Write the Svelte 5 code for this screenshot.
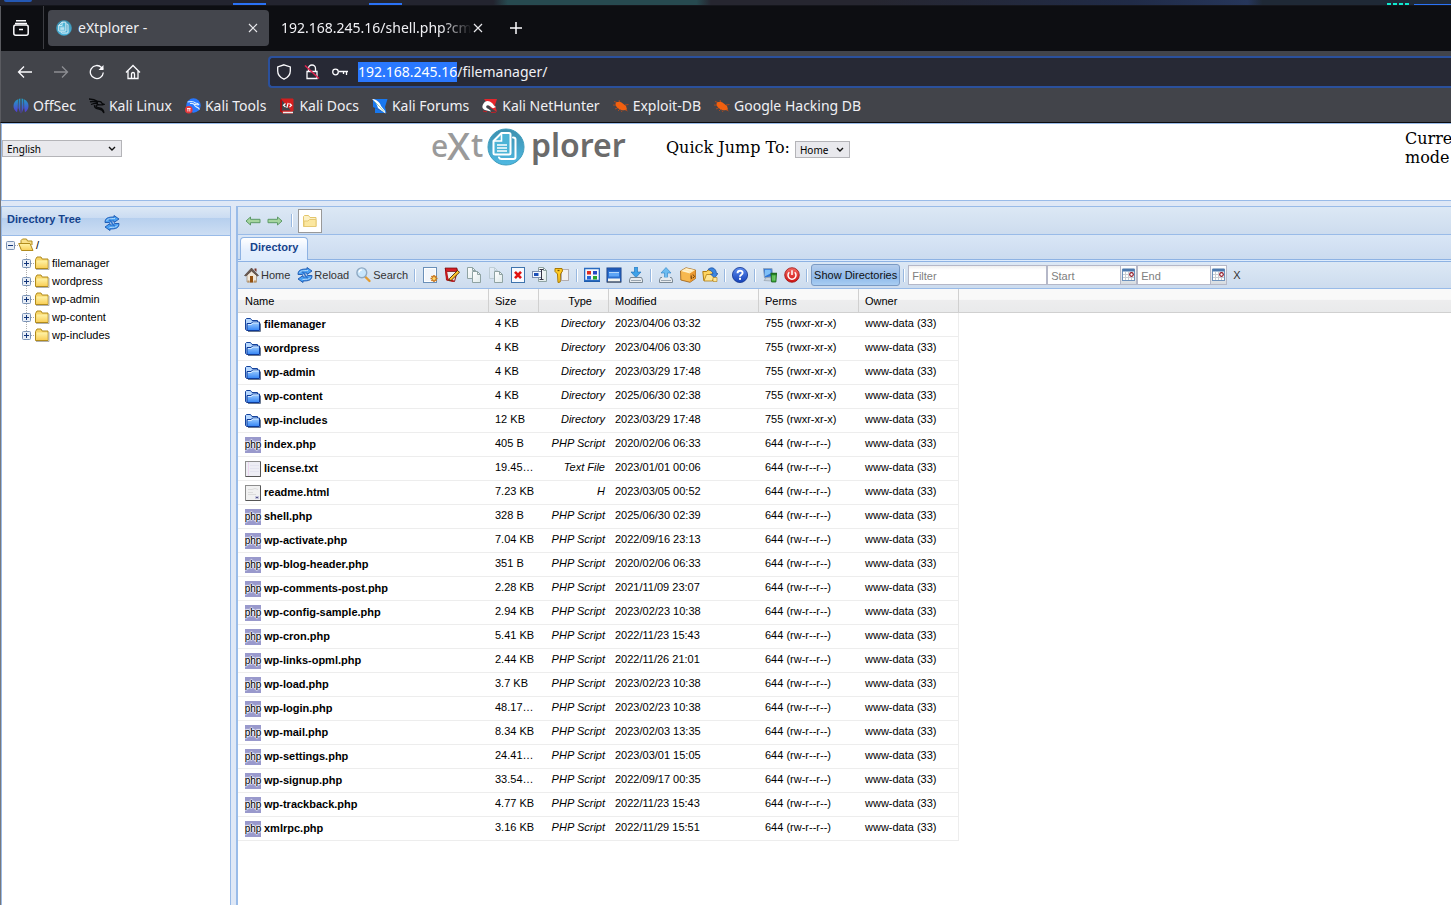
<script>
  import { onMount } from 'svelte';

  let urlBox;
  onMount(() => {
    urlBox.focus({ preventScroll: true });
    urlBox.setSelectionRange(0, 14);
  });

  const bookmarks = [
    ['offsec', 'OffSec'],
    ['kali', 'Kali Linux'],
    ['tools', 'Kali Tools'],
    ['docs', 'Kali Docs'],
    ['forums', 'Kali Forums'],
    ['nethunter', 'Kali NetHunter'],
    ['bug', 'Exploit-DB'],
    ['bug', 'Google Hacking DB']
  ];

  const folders = ['filemanager', 'wordpress', 'wp-admin', 'wp-content', 'wp-includes'];

  const labelled = [
    ['home', 'Home'],
    ['reload', 'Reload'],
    ['search', 'Search']
  ];

  const iconGroups = [
    [
      ['newfile', 'New'],
      ['edit', 'Edit'],
      ['copy', 'Copy'],
      ['move', 'Move'],
      ['delete', 'Delete'],
      ['rename', 'Rename'],
      ['chmod', 'Permissions']
    ],
    [
      ['view', 'View'],
      ['window', 'Diff'],
      ['download', 'Download']
    ],
    [
      ['upload', 'Upload'],
      ['archive', 'Archive'],
      ['extract', 'Extract']
    ],
    [['help', 'Info']],
    [
      ['ftp', 'Network'],
      ['logout', 'Logout']
    ]
  ];

  const DIR = '755 (rwxr-xr-x)';
  const FILE = '644 (rw-r--r--)';
  const rows = [
    ['folder', 'filemanager', '4 KB', 'Directory', '2023/04/06 03:32', DIR],
    ['folder', 'wordpress', '4 KB', 'Directory', '2023/04/06 03:30', DIR],
    ['folder', 'wp-admin', '4 KB', 'Directory', '2023/03/29 17:48', DIR],
    ['folder', 'wp-content', '4 KB', 'Directory', '2025/06/30 02:38', DIR],
    ['folder', 'wp-includes', '12 KB', 'Directory', '2023/03/29 17:48', DIR],
    ['php', 'index.php', '405 B', 'PHP Script', '2020/02/06 06:33', FILE],
    ['txt', 'license.txt', '19.45 KB', 'Text File', '2023/01/01 00:06', FILE],
    ['html', 'readme.html', '7.23 KB', 'H', '2023/03/05 00:52', FILE],
    ['php', 'shell.php', '328 B', 'PHP Script', '2025/06/30 02:39', FILE],
    ['php', 'wp-activate.php', '7.04 KB', 'PHP Script', '2022/09/16 23:13', FILE],
    ['php', 'wp-blog-header.php', '351 B', 'PHP Script', '2020/02/06 06:33', FILE],
    ['php', 'wp-comments-post.php', '2.28 KB', 'PHP Script', '2021/11/09 23:07', FILE],
    ['php', 'wp-config-sample.php', '2.94 KB', 'PHP Script', '2023/02/23 10:38', FILE],
    ['php', 'wp-cron.php', '5.41 KB', 'PHP Script', '2022/11/23 15:43', FILE],
    ['php', 'wp-links-opml.php', '2.44 KB', 'PHP Script', '2022/11/26 21:01', FILE],
    ['php', 'wp-load.php', '3.7 KB', 'PHP Script', '2023/02/23 10:38', FILE],
    ['php', 'wp-login.php', '48.17 KB', 'PHP Script', '2023/02/23 10:38', FILE],
    ['php', 'wp-mail.php', '8.34 KB', 'PHP Script', '2023/02/03 13:35', FILE],
    ['php', 'wp-settings.php', '24.41 KB', 'PHP Script', '2023/03/01 15:05', FILE],
    ['php', 'wp-signup.php', '33.54 KB', 'PHP Script', '2022/09/17 00:35', FILE],
    ['php', 'wp-trackback.php', '4.77 KB', 'PHP Script', '2022/11/23 15:43', FILE],
    ['php', 'xmlrpc.php', '3.16 KB', 'PHP Script', '2022/11/29 15:51', FILE]
  ];

  const sheet = (x, y, w, h, stroke = '#8fa3a3') =>
    `<path d="M${x} ${y}h${w - 3}l3 3v${h - 3}h-${w}z" fill="url(#gPaper)" stroke="${stroke}"/><path d="M${x + w - 3} ${y}v3h3" fill="none" stroke="${stroke}"/>`;

  const icons = {
    offsec:
      '<g fill="url(#gOff)"><path d="M5 1.200A7.500 7.500 0 0 0 .5 8 7.500 7.500 0 0 0 4 14.200L4.800 10z"/><path d="M5.700 1Q6.500.6 7.400.5V15.500L5.400 10z"/><path d="M8.600.5q1 .1 1.700.5L10.600 10l-2 5.500z"/><path d="M11 1.200A7.500 7.500 0 0 1 15.500 8 7.500 7.500 0 0 1 12 14.200L11.200 10z"/></g>',
    kali:
      '<path d="M0 1c4 0 6.500.8 9 2.500-2.500-.6-5-.6-8 .4 3-.4 5.500-.3 8 .6M2 6.500c2.500-1 4.500-1.300 7-1M9 3.500c2.500-.3 3.700.8 4.200 2l2 .8-2 .6c-2 .3-5-.9-6 .6-.7 1.300 1.200 2 3.200 2.300 2.800.4 4.200 1.800 4.600 5.200-1.200-2.600-2.200-3.500-5-3.900-2.600-.4-5-1.500-4.500-4" fill="none" stroke="#08090b" stroke-width="1.300"/>',
    tools:
      '<circle cx="8.500" cy="7.500" r="7.200" fill="#2777ff"/><path d="M2.500 4c4-1 7 0 8 1 2 0 3 .8 3.600 2M5 5.500c3-.5 4 .5 4.500 1.500-.5 2 4 1.600 5 4.500M9.500 6c1 1 2.500.6 4 1" fill="none" stroke="#dff0ff" stroke-width="1.100"/><circle cx="3.800" cy="11.800" r="3.800" fill="#e5383b"/><path d="M2 10.500h3.600M2.900 10.500v3M4.800 10.500v3" stroke="#fff" stroke-width=".9"/>',
    docs:
      '<path d="M2 1h12v12H4q-1 0-1 1t1 1h10" fill="#d31f1f" stroke="#d31f1f"/><path d="M2 1.500v12.500" stroke="#a00d12" stroke-width="2"/><path d="M4 14.500h10" stroke="#eee" stroke-width="1.500"/><path d="M6.500 5.500 4.500 7.300l2 1.800M10.500 5.500l2 1.800-2 1.800M9.200 4.800 7.800 9.800" fill="none" stroke="#fff" stroke-width="1.200"/>',
    forums:
      '<path d="M1 1h14.500l-2.500 8 1.500 6L1 9z" fill="#1878ef"/><path d="M3 15h11L3 10z" fill="#1878ef"/><path d="M0 1c5 .5 8 3.500 9 7l4 5 .5 2.500L10 13 6 10C5 6 3 3.500 0 1z" fill="#fff"/><path d="M2.500 3.500 8 9l4 4.500" fill="none" stroke="#5a7" stroke-width=".6"/>',
    nethunter:
      '<path d="M2 1h13l-2 6 2 7-6-4z" fill="#e5262c"/><path d="M1 6.500C3 2 7 2 10 5c1.500 1.500 2 3 4 4l-3 1.200c-2-.4-3-3-5-3s-2.500 2-1 3 3 1 4 3.200L3 12C0 10.500 0 8.500 1 6.500z" fill="#fff"/><path d="M1 13l4 .8M9 14.500l5-.3" stroke="#c41f25"/>',
    bug:
      '<path d="M1 3.500l3 1M0 7l4 .2M2 11l3.500-1.500M6 2l1 2.500M12 7l3.500-.5M11.500 11.500l3 1.500M8 12.500l1 1.500M5 13l2-2" stroke="#b8481a" stroke-width=".9"/><path d="M2.500 6c0-2 3.500-3 6-1.500l4.500 3.500 1 3.500-3 .8C7 12.500 2.500 9 2.500 6z" fill="#f2600f"/>',
    newfile:
      '<rect x="1.500" y=".5" width="13" height="15" fill="#fff" stroke="#6a8fb8"/><rect x="3" y="2" width="10" height="12" fill="#f2f6fb"/><g stroke="#c9761a" stroke-width="1.600"><path d="M12 8v7M8.500 11.500h7M9.500 9l5 5M14.500 9l-5 5"/></g><circle cx="12" cy="11.500" r="1.600" fill="#ffd76a"/>',
    edit:
      '<path d="M1.500 1.500h11l1 2-3 11-8-1.500z" fill="#ececec" stroke="#8a1010"/><path d="M1 1h12v3.500H2z" fill="#d61f26" stroke="#6d0b0b" stroke-width=".7"/><path d="M2 4l1.500 8.500 6 1.500" fill="none" stroke="#c2181e" stroke-width="2"/><path d="M5.500 11.500 13.500 3.500l2 1.800-8 7.700-2.500.8z" fill="#ffc52e" stroke="#4c2b05" stroke-width=".9"/>',
    copy: sheet(1.5, 0.5, 8, 11) + sheet(6.5, 4.5, 8, 11),
    move: `<g opacity=".35">${sheet(1.5, 0.5, 8, 11)}</g>` + sheet(6.5, 4.5, 8, 11),
    delete:
      '<rect x="1.500" y=".5" width="13" height="15" fill="#f7faff" stroke="#3f74ad"/><path d="M5 4.800l6 6.400M11 4.800l-6 6.400" stroke="#e01212" stroke-width="2.600"/>',
    rename:
      sheet(6.5, 0.5, 8, 14) +
      '<rect x=".5" y="4.500" width="9" height="6" fill="#f4f8ff" stroke="#7d8fae"/><rect x="2" y="6" width="4.500" height="3" fill="#1d50b8"/><path d="M7.500 2.500h4M9.500 2.500v10M7.500 12.500h4" stroke="#334" fill="none"/>',
    chmod:
      '<rect x="7.500" y="2.500" width="7" height="11" fill="#f2f2f2" stroke="#b3aeb0"/><path d="M1 1.500h7l.5 2.500-2 3-.3 8L4 15.500 3.500 7 1 4.500z" fill="#ffcb25" stroke="#a97803"/><path d="M3.500 3.500h2" stroke="#7a5600" stroke-width="1.300"/>',
    view:
      '<rect x=".5" y="1.500" width="15" height="13" fill="#f4f7fc" stroke="#1b56a5"/><path d="M.5 1.500h15v12H.5z" fill="none" stroke="#2a6bc0" stroke-width="1.600"/><rect x="3" y="4" width="4" height="3.500" fill="#e02b1f"/><rect x="9" y="4" width="4" height="3.500" fill="#2446c4"/><rect x="3" y="9" width="4" height="3.500" fill="#2264d8"/><rect x="9" y="9" width="4" height="3.500" fill="#27a62c"/>',
    window:
      '<rect x="1" y="1" width="14" height="14" fill="#2a6fd0" stroke="#163f86"/><rect x="1.500" y="1.500" width="13" height="2" fill="#1f57b5"/><rect x="3" y="5" width="10" height="4.500" fill="#5ea5f6"/><path d="M3 5.500h10" stroke="#b6d7fb"/><rect x="2" y="11.500" width="12" height="3" fill="#f4f4ef"/><path d="M1 15h14" stroke="#555"/>',
    download:
      '<path d="M6.500 0h3v5H13L8 10.500 3 5h3.500z" fill="#3fa2e8" stroke="#1a6cb5" stroke-width=".6"/><path d="M2.500 10.500h11l1 2.500v2.500h-13V13z" fill="#e8ebee" stroke="#7a8894"/><path d="M3 13.500h10" stroke="#99a5b0"/>',
    upload:
      '<path d="M6.500 10.500h3V6H13L8 .5 3 6h3.500z" fill="#6dbcf0" stroke="#2b80c5" stroke-width=".6"/><path d="M4 10.500H2.500L1.500 13v2.500h13V13l-1-2.500H12" fill="#e8ebee" stroke="#7a8894"/><path d="M3 13.500h10" stroke="#99a5b0"/>',
    archive:
      '<path d="M.5 4 6 .8l9.500 2.200v8.500L10 15.300.8 13z" fill="#f7b84e" stroke="#9a5a0d" stroke-width=".8"/><path d="M.8 4 6 1l9.300 2.100L10 6.500z" fill="#ffe9b5"/><path d="M10 6.500 15.300 3.300v8L10 15z" fill="#eb9a33"/><path d="M3 3.700l6 1.500M6 2l6 1.500" stroke="#fff7df" stroke-width=".8"/><path d="M11.200 8.500v3l1-.5M13 7.500l1.500 2-1.500 1.500" stroke="#5d3706" fill="none" stroke-width=".9"/>',
    extract:
      '<path d="M.8 4.500h4l1-1.500h4l1 1.500v9h-9z" fill="#ffd55f" stroke="#b07c10"/><path d="M2 14 4.500 7.500H13L10.500 14z" fill="#ffe694" stroke="#b07c10" stroke-width=".8"/><path d="M6 2.500c3-3 8-2 8.500 4H16L12.500 11 8.500 7H11c0-2-2-3.500-5-4.500z" fill="#3b86e0" stroke="#1c4f9e" stroke-width=".7"/><path d="M11 10.500h4v4h-4z" fill="#ffe694" stroke="#b07c10" stroke-width=".6"/>',
    help:
      '<circle cx="8" cy="8" r="7.600" fill="url(#gHelp)" stroke="#12348f" stroke-width=".8"/><path d="M5.500 6.200C5.500 2.800 10.800 3 10.600 6c-.1 1.800-2.600 1.700-2.600 3.700" fill="none" stroke="#fff" stroke-width="1.900"/><rect x="7" y="10.800" width="2" height="2" fill="#fff"/>',
    ftp:
      '<path d="M1.500 1.500 10 1.500l.5 8-8 1.500z" fill="#2d74d6" stroke="#8fa5c0"/><path d="M3 2.800 8.500 2.700l.5 3.500-6 3z" fill="#7fc0f8"/><path d="M2 13.500l7 .5v-3.500H4.500z" fill="#c9d2da" stroke="#8a97a4" stroke-width=".6"/><path d="M9 7h5.500l-.6 8H9.600z" fill="#3aa936" stroke="#155c18" stroke-width=".8"/><path d="M8.500 6.500h6.500" stroke="#1d6b1f" stroke-width="1.500"/><path d="M11 8.500v5M12.800 8.500v5" stroke="#a7e59b" stroke-width=".7"/>',
    logout:
      '<circle cx="8" cy="8" r="7.300" fill="url(#gRed)" stroke="#a01212" stroke-width=".8"/><path d="M5.300 5.200a4 4 0 1 0 5.400 0M8 3.200V8" fill="none" stroke="#fff" stroke-width="1.500"/>',
    home:
      '<path d="M3 8v7h9.500V8L7.500 3.500z" fill="#f1e8da" stroke="#9a8874" stroke-width=".7"/><path d="M10.500 1.500h2V5l-2-2z" fill="#7b3325"/><path d="M.5 8.500 7.500 1l7 7.500-1.200.5L7.500 4 2 9z" fill="#6b5a52" stroke="#483a34" stroke-width=".6"/><rect x="6" y="9" width="3" height="6.500" fill="#93500f"/><path d="M3.500 13.500H5.500v2h-2zM10 13.500h2.500v2H10z" fill="#bb9668"/>',
    reload:
      '<path d="M1 7.500C1 3 4 2 10 2V.5L15 4l-5 3.500V6C6.500 6 6 6.500 5.500 7.500z" fill="#4aa0f2" stroke="#1a56b0" stroke-width=".9"/><path d="M15 8.500C15 13 12 14 6 14v1.500L1 12l5-3.500V10c3.500 0 4-.5 4.500-1.500z" fill="#4aa0f2" stroke="#1a56b0" stroke-width=".9"/><path d="M5 4l6 8" stroke="#2b74cf" stroke-width="1.600"/><path d="M2.500 6C3.500 3.800 6 3.500 11 3.500M13.500 10.500C12 12 10 12.500 5.500 12.500" fill="none" stroke="#b9defc" stroke-width=".9"/>',
    search:
      '<path d="M9 9.500 13.500 14" stroke="#e39b32" stroke-width="2.400" stroke-linecap="round"/><circle cx="5.800" cy="5.800" r="4.900" fill="#c8e6fc" stroke="#8fa9c2" stroke-width="1.400"/><path d="M3 5.500a3 3 0 0 1 3-2.700" stroke="#fff" stroke-width="1.300" fill="none"/>',
    folder:
      '<path d="M.5 12.500V2.500L1.500 1.500h4l1.500 2h5.500V5" fill="#b7d8ff" stroke="#15439c"/><path d="M.5 12.500 2 13.500V6.500h4L7.500 5H14.500v8.500H2" fill="url(#gBlue)" stroke="#0d3a99"/><path d="M3 7.500H6.500L8 6h5.500" stroke="#d5e9ff" fill="none"/><path d="M3 14.500h12.500V6.500" stroke="#6a7890" fill="none"/>',
    txt:
      '<rect x=".5" y=".5" width="15" height="15" fill="#eeeef5" stroke="#8d8d8d"/><path d="M15.500 1v14.500H1" stroke="#555" fill="none"/><path d="M3.500 1v14" stroke="#ecd6ee"/><path d="M5 4.500h9M5 7.500h9M5 10.500h9" stroke="#e4e4f0"/>',
    html:
      '<rect x=".5" y=".5" width="15" height="15" fill="#f1f1f1" stroke="#8d8d8d"/><path d="M15.500 1v14.500H1" stroke="#555" fill="none"/><path d="M3 4.500h4l3-1 3 1M3 7.500h5M3 9.500h8" stroke="#dcdcdc" fill="none"/><rect x="10" y="11" width="4" height="3" fill="#c5c5dc"/><path d="M11 12.500h2" stroke="#555588"/>',
    treefolder:
      '<path d="M1.500 4.500 3 2h4l1.200 2H14v9.500H1.500z" fill="#f7d568" stroke="#b18b1c"/><path d="M2.500 5.500h11v7.500h-11z" fill="url(#gYel)"/><path d="M2 14.500h13V5" stroke="#9d9d9d" fill="none" stroke-width=".8"/>',
    treeopen:
      '<path d="M3 12V3.500L4.500 2h4l1 2H14v4" fill="#f9e08a" stroke="#b18b1c"/><path d="M.7 6.500H12L15 13.500H3.500z" fill="url(#gYel)" stroke="#b18b1c"/>',
    left: '<path d="M1 8l4.500-4v2.300H15v3.400H5.500V12z" fill="#a5d59f" stroke="#5d9a68"/>',
    right: '<path d="M15 8l-4.500-4v2.300H1v3.400h9.500V12z" fill="#a5d59f" stroke="#5d9a68"/>',
    dirbtn:
      '<path d="M1.500 13.500v-10l1-1h4l1.500 2h6v9z" fill="#fdf1c4" stroke="#e3c66d"/><path d="M2 13.500V8h4l1.500-1.500H14v7z" fill="#fbe7a0" stroke="#e6c974"/>',
    calendar:
      '<rect x="1.500" y="2.500" width="12" height="11" fill="#fff" stroke="#6f93bd"/><path d="M1.500 3h12" stroke="#4b78ad" stroke-width="3"/><path d="M4.500 5v8M7.500 5v8M10.500 5v8M2 7.500h11M2 10.500h11" stroke="#c8cdd2"/><circle cx="10.500" cy="7.500" r="1.800" fill="#fff" stroke="#8d1020" stroke-width="1.200"/>'
  };
</script>

{#snippet icon(name)}
  <svg class="icon" viewBox="0 0 16 16" width="16" height="16" aria-hidden="true">{@html icons[name]}</svg>
{/snippet}

{#snippet badge(size)}
  <svg class="icon" viewBox="0 0 38 38" width={size} height={size} aria-hidden="true">
    <circle cx="19" cy="19" r="18" fill="url(#gLogo)" stroke="#3f9dbd" />
    <path d="M14.500 5H22q1.500 0 1.500 1.500V25q0 1.500-1.500 1.500H8q-1.500 0-1.500-1.500V13z" fill="#4db4d6" stroke="#fff" stroke-width="2" stroke-linejoin="round" />
    <path d="M14.500 5v8H6.500M10 17h10M10 20h10M10 23h10" fill="none" stroke="#fff" stroke-width="1.600" />
    <path d="M26 9.500q2.500 0 2.500 2V29q0 2-2 2H14.500q-2 0-2.500-1.500" fill="none" stroke="#fff" stroke-width="2" stroke-linecap="round" />
  </svg>
{/snippet}

<svg class="defs" aria-hidden="true">
  <defs>
    <linearGradient id="gOff" gradientUnits="userSpaceOnUse" x1="0" y1="0" x2="0" y2="16"><stop stop-color="#1ea3c4" /><stop offset="1" stop-color="#5a2fd6" /></linearGradient>
    <linearGradient id="gPaper" x2="1" y2="1"><stop stop-color="#fff" /><stop offset="1" stop-color="#dfeaea" /></linearGradient>
    <linearGradient id="gBlue" x2="0" y2="1"><stop stop-color="#a5d2ff" /><stop offset="1" stop-color="#3383f4" /></linearGradient>
    <linearGradient id="gYel" x2="0" y2="1"><stop stop-color="#fff3a8" /><stop offset="1" stop-color="#f9cf58" /></linearGradient>
    <linearGradient id="gLogo" x2="0" y2="1"><stop stop-color="#3c8fae" /><stop offset="1" stop-color="#4fb9e2" /></linearGradient>
    <linearGradient id="gHelp" x2="0" y2="1"><stop stop-color="#5d8df0" /><stop offset="1" stop-color="#1642b8" /></linearGradient>
    <linearGradient id="gRed" x2="0" y2="1"><stop stop-color="#f46a62" /><stop offset="1" stop-color="#cf1313" /></linearGradient>
  </defs>
</svg>

<div class="screen">
  <div class="desktop">
    <i class="menu"></i><i class="task"></i><i class="task"></i><i class="meter"></i>
  </div>

  <div class="browser">
    <div class="tabs">
      <button class="recent" aria-label="Recent browsing">
        <svg viewBox="0 0 16 16" width="16" height="16" fill="none" stroke="#fbfbfe" stroke-width="1.500" aria-hidden="true">
          <path d="M3 .8h10M2 3.500h12" />
          <rect x=".8" y="5" width="14.400" height="10.200" rx="2" />
          <path d="M6 9.500h4" />
        </svg>
      </button>
      <div class="tab active">
        {@render badge(16)}
        <span class="title">eXtplorer -</span>
        <button class="close" aria-label="Close tab"><svg viewBox="0 0 10 10" width="10" height="10" aria-hidden="true"><path d="M1 1l8 8M9 1L1 9" stroke="#e8e8ec" stroke-width="1.200" /></svg></button>
      </div>
      <div class="tab second">
        <span class="title fade">192.168.245.16/shell.php?cmd</span>
        <button class="close" aria-label="Close tab"><svg viewBox="0 0 10 10" width="10" height="10" aria-hidden="true"><path d="M1 1l8 8M9 1L1 9" stroke="#e8e8ec" stroke-width="1.200" /></svg></button>
      </div>
      <button class="plus" aria-label="New tab"><svg viewBox="0 0 12 12" width="12" height="12" aria-hidden="true"><path d="M6 0v12M0 6h12" stroke="#fbfbfe" stroke-width="1.500" /></svg></button>
    </div>

    <div class="nav">
      <button aria-label="Back"><svg viewBox="0 0 16 16" width="16" height="16" aria-hidden="true"><path d="M15 8H2M7 2.500 1.500 8 7 13.500" /></svg></button>
      <button aria-label="Forward" disabled><svg viewBox="0 0 16 16" width="16" height="16" aria-hidden="true"><path d="M1 8h13M9 2.500 14.500 8 9 13.500" /></svg></button>
      <button aria-label="Reload page"><svg viewBox="0 0 16 16" width="16" height="16" aria-hidden="true"><path d="M14.300 8.500A6.500 6.500 0 1 1 12.500 3.500L14 5" /><path d="M14.500 1v5h-5z" fill="#fbfbfe" stroke="none" /></svg></button>
      <button aria-label="Home page"><svg viewBox="0 0 16 16" width="16" height="16" aria-hidden="true"><path d="M1 8.500 8 1.500l7 7M3 7v7.500h10V7M6.500 14.500V10q0-1.500 1.500-1.500T9.500 10v4.500" /></svg></button>
      <label class="urlbar">
        <svg viewBox="0 0 16 16" width="16" height="16" aria-hidden="true"><path d="M8 .8 14.300 3v4c0 4-2.300 6.500-6.300 8.200C4 13.500 1.700 11 1.700 7V3z" /></svg>
        <svg viewBox="0 0 16 16" width="16" height="16" aria-hidden="true"><path d="M4.500 7V4.500a3.500 3.500 0 0 1 7 0V7M3 7.500h10v7H3z" /><path d="M1 1.500l14 13" stroke="#e0244f" stroke-width="1.600" /></svg>
        <svg viewBox="0 0 16 16" width="16" height="16" aria-hidden="true"><circle cx="3.500" cy="8" r="2.800" /><path d="M6.500 7.500H16M14.500 7.500V11M11.500 7.500V10" /></svg>
        <input bind:this={urlBox} value="192.168.245.16/filemanager/" aria-label="Address" spellcheck="false" />
      </label>
    </div>

    <div class="bookmarks">
      {#each bookmarks as [name, label]}
        <a href="#top">{@render icon(name)}{label}</a>
      {/each}
    </div>
  </div>

  <div class="page">
    <header>
      <div class="lang">
        <span class="pick">
          <select aria-label="Language"><option>English</option></select>
          <svg viewBox="0 0 8 6" width="8" height="6" aria-hidden="true"><path d="M1 1l3 3 3-3" /></svg>
        </span>
      </div>
      <svg class="logo" viewBox="0 0 196 44" width="196" height="44" role="img" aria-label="eXtplorer">
        <g font-family="'Noto Sans', sans-serif">
          <g fill="#9a9a9a" font-weight="500">
            <text x="0" y="33" font-size="30">e</text>
            <text x="16" y="36" font-size="38">X</text>
            <text x="40" y="33" font-size="32">t</text>
          </g>
          <text x="100" y="33" font-size="32" font-weight="600" fill="#6b6b6b">plorer</text>
        </g>
        <g transform="translate(56 4)">{@render badge(38)}</g>
      </svg>
      <label class="jump">
        Quick Jump To:
        <span class="pick small">
          <select><option>Home</option></select>
          <svg viewBox="0 0 8 6" width="8" height="6" aria-hidden="true"><path d="M1 1l3 3 3-3" /></svg>
        </span>
      </label>
      <div class="mode">Current<br />mode</div>
    </header>

    <main>
      <aside>
        <div class="treehead">
          <h2>Directory Tree</h2>
          <button aria-label="Reload tree">{@render icon('reload')}</button>
        </div>
        <ul class="tree">
          <li>
            <div class="node">
              <svg viewBox="0 0 9 9" width="9" height="9" aria-hidden="true"><rect x=".5" y=".5" width="8" height="8" rx="1" fill="#e8eef6" stroke="#7b93b5" /><path d="M2 4.500h5" stroke="#12357a" /></svg>
              <i class="dots"></i>
              {@render icon('treeopen')}<a href="#top">/</a>
            </div>
            <ul>
              {#each folders as f}
                <li class="node">
                  <svg viewBox="0 0 9 9" width="9" height="9" aria-hidden="true"><rect x=".5" y=".5" width="8" height="8" rx="1" fill="#e8eef6" stroke="#7b93b5" /><path d="M2 4.500h5M4.500 2v5" stroke="#12357a" /></svg>
                  <i class="dots"></i>
                  {@render icon('treefolder')}<a href="#top">{f}</a>
                </li>
              {/each}
            </ul>
          </li>
        </ul>
      </aside>

      <section>
        <div class="bar top">
          <button aria-label="Back in history">{@render icon('left')}</button>
          <button aria-label="Forward in history">{@render icon('right')}</button>
          <i class="sep"></i>
          <button class="dirbtn" aria-label="Toggle tree">{@render icon('dirbtn')}</button>
        </div>
        <div class="strip"><button class="dirtab">Directory</button></div>
        <div class="bar tools">
          {#each labelled as [name, label]}
            <button class="labelled">{@render icon(name)}{label}</button>
          {/each}
          {#each iconGroups as group}
            <i class="sep"></i>
            {#each group as [name, label]}
              <button aria-label={label}>{@render icon(name)}</button>
            {/each}
          {/each}
          <i class="sep"></i>
          <button class="pressed">Show Directories</button>
          <i class="sep"></i>
          <input class="filter" placeholder="Filter" aria-label="Filter" />
          <span class="date">
            <input placeholder="Start" aria-label="Start" />
            <button aria-label="Pick start date">{@render icon('calendar')}</button>
          </span>
          <span class="date">
            <input placeholder="End" aria-label="End" />
            <button aria-label="Pick end date">{@render icon('calendar')}</button>
          </span>
          <button class="clear">X</button>
        </div>

        <table>
          <colgroup>
            <col class="c-name" /><col class="c-size" /><col class="c-type" /><col class="c-mod" /><col class="c-perm" /><col class="c-perm" /><col />
          </colgroup>
          <thead>
            <tr>
              <th>Name</th><th>Size</th><th class="type">Type</th><th>Modified</th><th>Perms</th><th>Owner</th><td></td>
            </tr>
          </thead>
          <tbody>
            {#each rows as [kind, name, size, type, modified, perms]}
              <tr>
                <td>
                  <div class="name">
                    {#if kind === 'php'}<span class="php" aria-hidden="true">php</span>{:else}{@render icon(kind)}{/if}
                    <b>{name}</b>
                  </div>
                </td>
                <td>{size}</td>
                <td class="type"><em>{type}</em></td>
                <td>{modified}</td>
                <td>{perms}</td>
                <td>www-data (33)</td>
              </tr>
            {/each}
          </tbody>
        </table>
      </section>
    </main>
  </div>
</div>

<style>
  :global(body) {
    background: #dfe8f6;
  }
  * {
    box-sizing: border-box;
  }
  button {
    border: 0;
    padding: 0;
    background: none;
    font: inherit;
    color: inherit;
    display: flex;
    align-items: center;
    justify-content: center;
    flex: none;
  }
  input,
  select {
    font: inherit;
    color: inherit;
    margin: 0;
    border-radius: 0;
    outline: none;
  }
  a {
    color: inherit;
    text-decoration: none;
  }
  ul {
    list-style: none;
    margin: 0;
    padding: 0;
  }
  .icon {
    flex: none;
    display: block;
  }
  .defs {
    position: absolute;
    width: 0;
    height: 0;
  }
  .screen {
    min-height: 100vh;
    display: flex;
    flex-direction: column;
    overflow: hidden;
  }

  .desktop {
    height: 6px;
    display: flex;
    align-items: flex-start;
    background: linear-gradient(90deg, #23242f 0 34%, #274a50 35% 48%, #262630 49% 60%, #202b47 78%, #26365a 86%, #1f2936 87%);
    border-bottom: 1px solid #15161c;
    flex: none;
  }
  .menu {
    width: 28px;
    height: 2px;
    margin-left: 4px;
    background: #2458b4;
    border-radius: 0 0 14px 14px;
  }
  .task {
    width: 33px;
    height: 2px;
    margin-top: 3px;
    margin-left: 201px;
    background: #2a72f5;
  }
  .task + .task {
    margin-left: 103px;
  }
  .meter {
    width: 64px;
    height: 2px;
    margin: 3px 0 0 auto;
    background: repeating-linear-gradient(90deg, #0fe9cf 0 4px, transparent 4px 6px) 0 0 / 23px 2px no-repeat,
      linear-gradient(#2a72f5, #2a72f5) 27px 1px / 37px 1px no-repeat;
  }

  .browser {
    border-left: 1px solid #5a5b60;
    border-bottom: 1px solid #0b0b0d;
    background: #42444a;
    color: #f0f0f4;
    font: 14px/20px 'Noto Sans', sans-serif;
    flex: none;
  }
  .tabs {
    height: 45px;
    padding-bottom: 2px;
    background: #0d0e12;
    display: flex;
    align-items: center;
  }
  .recent {
    width: 43px;
    height: 43px;
    border-right: 1px solid #3c3d42;
    padding-right: 2px;
  }
  .tab {
    height: 36px;
    display: flex;
    align-items: center;
    border-radius: 4px;
  }
  .active {
    width: 221px;
    margin-left: 4px;
    padding: 0 10px 0 8px;
    gap: 6px;
    background: #44464d;
  }
  .second {
    width: 222px;
    padding: 0 7px 0 12px;
  }
  .title {
    flex: 1;
    min-width: 0;
    padding-top: 1px;
    overflow: hidden;
    white-space: nowrap;
  }
  .fade {
    mask-image: linear-gradient(90deg, #000 84%, transparent);
  }
  .close {
    width: 12px;
    height: 20px;
  }
  .plus {
    width: 30px;
    height: 30px;
    margin-left: 10px;
  }

  .nav {
    height: 39px;
    padding-left: 12px;
    display: flex;
    align-items: center;
  }
  .nav button {
    width: 24px;
    height: 24px;
    margin: 2px 12px 0 0;
  }
  .nav button:disabled {
    opacity: 0.4;
  }
  .nav svg {
    fill: none;
    stroke: #fbfbfe;
    stroke-width: 1.3;
    flex: none;
  }
  .urlbar {
    flex: 1;
    height: 32px;
    margin: 2px 0 0 111px;
    padding-left: 6px;
    display: flex;
    align-items: center;
    gap: 12px;
    background: #272935;
    border: 2px solid #2a509c;
    border-right: 0;
    border-radius: 4px 0 0 4px;
  }
  .urlbar input {
    flex: 1;
    min-width: 0;
    height: 20px;
    margin-left: -2px;
    padding: 0;
    border: 0;
    background: none;
  }
  .urlbar input::selection {
    background: #2a78ff;
    color: #fff;
  }

  .bookmarks {
    height: 32px;
    padding: 0 12px;
    display: flex;
    align-items: center;
    gap: 13px;
    white-space: nowrap;
  }
  .bookmarks a {
    display: flex;
    align-items: center;
    gap: 4px;
  }

  .page {
    flex: 1;
    display: flex;
    flex-direction: column;
    border-left: 1px solid #77787c;
    background: #dfe8f6;
    font: 11px/14px 'Liberation Sans', Arial, sans-serif;
    color: #000;
  }
  header {
    height: 78px;
    border: 1px solid #99bbe8;
    border-right: 0;
    background: #fff;
    display: grid;
    grid-template-columns: minmax(0, 429fr) minmax(0, 235fr) minmax(0, 739fr) minmax(0, 46fr);
    align-items: start;
    font: 16px/19px 'DejaVu Serif', serif;
  }
  .lang {
    display: flex;
    padding-top: 16px;
  }
  .logo {
    overflow: visible;
  }
  .pick {
    display: inline-grid;
    align-items: center;
    font: 10px/14px 'Noto Sans', sans-serif;
    width: 120px;
  }
  .pick.small {
    width: 55px;
    margin-top: 4px;
  }
  .pick select,
  .pick svg {
    grid-area: 1 / 1;
  }
  .pick select {
    appearance: none;
    width: 100%;
    height: 17px;
    padding: 0 4px;
    border: 1px solid #b4b4b8;
    background: #e9e9ed;
  }
  .pick svg {
    justify-self: end;
    margin-right: 6px;
    pointer-events: none;
    fill: none;
    stroke: #111;
    stroke-width: 1.4;
  }
  .jump {
    display: flex;
    align-items: center;
    gap: 5px;
    padding-top: 13px;
    white-space: nowrap;
  }
  .mode {
    padding-top: 5px;
    overflow: hidden;
  }

  main {
    flex: 1;
    display: grid;
    grid-template-columns: 230px minmax(0, 1fr);
    gap: 5px;
    padding-top: 5px;
  }
  aside {
    background: #fff;
    border: 1px solid #99bbe8;
    border-bottom: 0;
  }
  .treehead {
    height: 29px;
    padding: 0 5px;
    display: flex;
    align-items: center;
    gap: 23px;
    background: linear-gradient(#dce8f5, #cbdcf2 38%, #b6cfee 39%, #cddef3);
    border-bottom: 1px solid #99bbe8;
  }
  h2 {
    margin: 0 0 4px;
    font-size: 11px;
    line-height: 14px;
    color: #15428b;
  }
  .treehead button {
    padding-top: 3px;
  }
  .tree {
    padding-left: 4px;
  }
  .tree ul {
    padding-left: 16px;
    background: repeating-linear-gradient(#b0b0b0 0 1px, transparent 1px 2px) 20px 0 / 1px 81px no-repeat;
  }
  .node {
    height: 18px;
    display: flex;
    align-items: center;
  }
  .dots {
    width: 3px;
    border-top: 1px dotted #aaa;
  }
  .node a {
    padding-left: 2px;
  }

  section {
    background: #fff;
    border: solid #99bbe8;
    border-width: 1px 0 0 2px;
    min-width: 0;
  }
  .bar {
    display: flex;
    align-items: center;
    background: linear-gradient(#dce8f5, #cddcee);
    border-bottom: 1px solid #99bbe8;
    color: #333;
  }
  .top {
    height: 28px;
    padding-left: 4px;
  }
  .bar button {
    height: 22px;
    padding: 0 3px;
    gap: 1px;
  }
  .bar .labelled + .labelled {
    padding-left: 4px;
  }
  .sep {
    width: 2px;
    height: 13px;
    margin: 0 3px;
    background: linear-gradient(90deg, #98b8e0 50%, #fff 50%);
    flex: none;
  }
  .top .sep {
    margin: 0 5px;
  }
  .bar .dirbtn {
    height: 24px;
    border: 1px solid #999;
    background: #fff;
  }
  .strip {
    height: 27px;
    padding: 2px 2px 0;
    display: flex;
    align-items: flex-start;
    background: linear-gradient(#d9e6f6, #cbdbef 24px, #8db2e3 24px, #8db2e3 25px, #deecfd 25px);
    border-bottom: 1px solid #8db2e3;
  }
  .dirtab {
    height: 23px;
    padding: 0 9px 4px;
    border: 1px solid #8db2e3;
    border-bottom: 0;
    border-radius: 4px 4px 0 0;
    background: linear-gradient(#fff, #e3eefd 60%, #deecfd);
    color: #15428b;
    font-weight: 700;
  }
  .tools {
    height: 27px;
    padding-left: 3px;
  }
  .bar .pressed {
    padding: 0 2px;
    border: 1px solid #7a9ac4;
    border-radius: 3px;
    background: linear-gradient(#b5cdec, #8fb9ea 60%, #a9cdf2);
    color: #111;
  }
  .bar input {
    height: 20px;
    padding: 1px 3px 0;
    border: 1px solid #b5b8c8;
    background: linear-gradient(#eeeeee, #fff 4px);
  }
  .bar input::placeholder {
    color: #808080;
    opacity: 1;
  }
  .filter {
    width: 139px;
  }
  .date {
    display: flex;
    width: 90px;
  }
  .date input {
    width: 73px;
    border-right: 0;
  }
  .bar .date button {
    width: 17px;
    height: 20px;
    padding: 0;
    border: 1px solid #b5b8c8;
    background: linear-gradient(#fff, #d6dbe0);
  }
  .bar .clear {
    margin-left: 3px;
  }

  table {
    width: 100%;
    table-layout: fixed;
    border-collapse: separate;
    border-spacing: 0;
  }
  .c-name {
    width: 251px;
  }
  .c-size {
    width: 50px;
  }
  .c-type {
    width: 70px;
  }
  .c-mod {
    width: 150px;
  }
  .c-perm {
    width: 100px;
  }
  th,
  td {
    height: 24px;
    padding: 0 3px 0 6px;
    text-align: left;
    font-weight: 400;
    white-space: nowrap;
    overflow: hidden;
    text-overflow: ellipsis;
    vertical-align: middle;
  }
  thead th,
  thead td {
    background: linear-gradient(#f9f9f9 45%, #ededee 50%, #e9eaeb);
    border-bottom: 1px solid #d0d0d0;
  }
  thead th {
    border-right: 1px solid #d0d0d0;
  }
  th:first-child,
  td:first-child {
    padding-left: 7px;
  }
  tbody td {
    border-bottom: 1px solid #ededed;
    padding-bottom: 3px;
  }
  tbody td:last-child {
    border-right: 1px solid #ededed;
  }
  tbody td:first-child {
    padding-bottom: 0;
  }
  .type {
    text-align: right;
    padding-right: 4px;
  }
  thead .type {
    padding-right: 16px;
  }
  .name {
    display: flex;
    align-items: center;
    gap: 3px;
  }
  .name b {
    padding-bottom: 2px;
  }
  .php {
    width: 16px;
    height: 16px;
    background: #9999cc;
    color: #000;
    font: 10px/16px 'Liberation Sans', Arial, sans-serif;
    display: flex;
    justify-content: center;
    flex: none;
    text-shadow: 1px 0 1px #fff, -1px 0 1px #fff, 0 1px 1px #fff, 0 -1px 1px #fff;
  }
</style>
